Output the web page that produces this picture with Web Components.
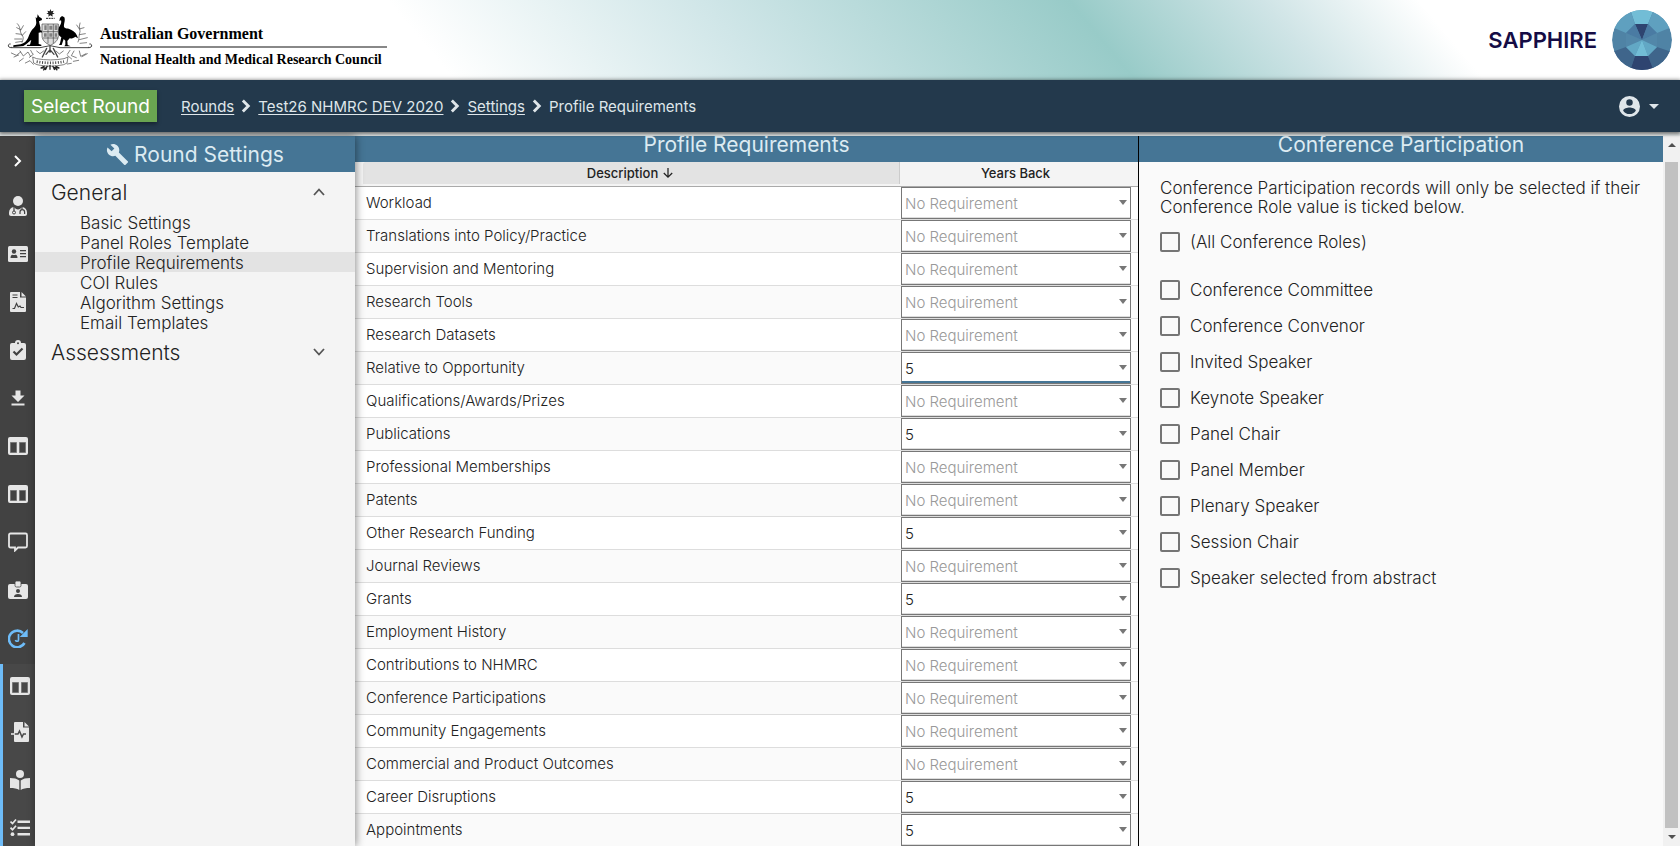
<!DOCTYPE html>
<html lang="en">
<head>
<meta charset="utf-8">
<title>Profile Requirements - Sapphire</title>
<style>
html,body{height:100%;margin:0}
body{font-family:Inter,"Open Sans",sans-serif;font-size:15px;color:#222;background:#fafafa;overflow:hidden}
</style>
</head>
<body>
<sapphire-app></sapphire-app>

<script>
const define = (name, css, html, after) => {
  const t = document.createElement('template');
  t.innerHTML = `<style>*{box-sizing:border-box}${css}</style>${html}`;
  customElements.define(name, class extends HTMLElement {
    constructor() {
      super();
      this.attachShadow({mode: 'open'}).append(t.content.cloneNode(true));
    }
    connectedCallback() { if (after) after(this, this.shadowRoot); }
  });
};

/* Icons are drawn on a 20 x 20 grid in the current colour; "var(--hole)" paints cut-outs. */
const columns = '<rect y="1" width="20" height="18" rx="2"/><path d="M2.500 6.500h6v10h-6zM11.500 6.500h6v10h-6z" fill="var(--hole)" stroke="#777" stroke-width="1"/>';
const ICONS = {
  right: '<path d="M7 5l5 5-5 5" fill="none" stroke="currentColor" stroke-width="2"/>',
  up: '<path d="M5 13l5-5.500 5 5.500" fill="none" stroke="currentColor" stroke-width="1.800"/>',
  down: '<path d="M5 7l5 5.500 5-5.500" fill="none" stroke="currentColor" stroke-width="1.800"/>',
  crumb: '<path d="M6.500 4l6 6-6 6" fill="none" stroke="currentColor" stroke-width="3.200"/>',
  arrow: '<path d="M10 3v13M4 10l6 6 6-6" fill="none" stroke="currentColor" stroke-width="1.800"/>',
  wrench: '<path d="M19.700 16.600l-8-8c.8-2 .3-4.400-1.300-6C8.700.9 6.100.5 4 1.500l3.600 3.600-2.500 2.500L1.400 4C.3 6.100.8 8.700 2.500 10.400c1.600 1.600 4 2.100 6 1.300l8 8c.4.4.9.4 1.300 0l2-2c.4-.3.4-.9-.1-1.100z"/>',
  user: '<path d="M10 0a10 10 0 100 20 10 10 0 000-20zm0 3a3 3 0 110 6.200A3 3 0 0110 3zm0 14.200a7.200 7.200 0 01-6-3.200c0-2 4-3.100 6-3.100s6 1.100 6 3.100a7.200 7.200 0 01-6 3.200z"/>',
  doctor: '<circle cx="10" cy="5" r="5"/><path d="M6 11c1 1.500 2.500 2.500 4 2.500s3-1 4-2.500c3 .3 5 2.500 5 5.500v1.500c0 1.200-.8 2-2 2H3c-1.200 0-2-.8-2-2v-1.500C1 13.500 3 11.300 6 11z"/><path d="M6 11v4M14 11v3M12 18v-2a2.300 2.300 0 014.600 0v2" fill="none" stroke="var(--hole)" stroke-width="1.200"/><circle cx="6" cy="16.500" r="1.500" fill="none" stroke="var(--hole)"/>',
  card: '<rect y="2" width="20" height="16" rx="1.500"/><g fill="var(--hole)"><circle cx="6" cy="7.500" r="2.200"/><path d="M2.500 14c0-2 1-3.200 2-3.200.6.400 2.400.4 3 0 1 0 2 1.200 2 3.200zM12 6h6v1.200h-6zM12 9h6v1.200h-6zM12 12h6v1.200h-6z"/></g>',
  contract: '<path d="M3 0h9v5.500h6V19a1 1 0 01-1 1H3a1 1 0 01-1-1V1a1 1 0 011-1zM13.500 0L18 4.500h-4.500z"/><path d="M4.500 3h5M4.500 5.500h5M4.500 16.500h2l2-5 1.800 3.500 1.700-1 1 1.500h3" fill="none" stroke="var(--hole)" stroke-width="1.200"/>',
  clipboard: '<path d="M4 3h3a3 3 0 016 0h3a2 2 0 012 2v13a2 2 0 01-2 2H4a2 2 0 01-2-2V5a2 2 0 012-2z"/><circle cx="10" cy="3.200" r="1" fill="var(--hole)"/><path d="M5.500 11.500l3 3 6-6" fill="none" stroke="var(--hole)" stroke-width="2.200"/>',
  download: '<path d="M7.500 2.500h5v5h4L10 14 3.500 7.500h4zM3.500 15.500h13v2h-13z"/>',
  columns,
  comment: '<path d="M2.500 1.500h15c1 0 1.500.5 1.500 1.500v11c0 1-.5 1.500-1.500 1.500h-7.500l-3 3v-3H2.500C1.500 15.500 1 15 1 14V3c0-1 .5-1.500 1.500-1.500z" fill="none" stroke="currentColor" stroke-width="1.800"/>',
  badge: '<path d="M2 4h16a2 2 0 012 2v11a2 2 0 01-2 2H2a2 2 0 01-2-2V6a2 2 0 012-2z"/><rect x="7" y="1" width="6" height="6" rx="1.500" stroke="var(--hole)" stroke-width=".8"/><g fill="var(--hole)"><circle cx="10" cy="11" r="2"/><path d="M6 17c0-2 1.500-3 4-3s4 1 4 3z"/></g>',
  history: '<path d="M15 5A8.300 8.300 0 1016.500 15" fill="none" stroke="currentColor" stroke-width="2.600"/><path d="M19.700 1v8h-8z"/><path d="M10.500 6v5.500a1.500 1.500 0 01-3 .5" fill="none" stroke="currentColor" stroke-width="1.700"/>',
  pulse: '<path d="M5 0h8v5.500h6V19a1 1 0 01-1 1H5a1 1 0 01-1-1V1a1 1 0 011-1zM14.500 0L19 4.500h-4.500z"/><path d="M4 12h4l1.500-3 2.500 6 1.500-3H16" fill="none" stroke="var(--hole)" stroke-width="1.500"/><path d="M1 11.200h4v1.600H1z"/>',
  reader: '<circle cx="10" cy="4" r="4"/><path d="M0 8c4 0 7 .8 9.300 2.500V20C7 18.500 4 18 0 18zM20 8c-4 0-7 .8-9.300 2.500V20c2.300-1.500 5.300-2 9.300-2z"/>',
  tasks: '<path d="M7.500 2.500H20v2.400H7.500zM7.500 8.700H20v2.400H7.500zM7.500 15H20v2.400H7.500z"/><circle cx="2.500" cy="16.200" r="1.900"/><path d="M.5 3.500l2 2 3.500-4M.5 9.700l2 2 3.500-4" fill="none" stroke="currentColor" stroke-width="1.700"/>'
};
customElements.define('ui-icon', class extends HTMLElement {
  constructor() { super(); this.attachShadow({mode: 'open'}); }
  connectedCallback() {
    this.shadowRoot.innerHTML = `<style>:host{display:inline-flex;flex:none;width:20px;height:20px}svg{width:100%;height:100%;display:block}</style>
      <svg viewBox="0 0 20 20" fill="currentColor" aria-hidden="true">${ICONS[this.getAttribute('name')]}</svg>`;
  }
});

define('coat-of-arms', ':host{display:block;width:110px;height:78px;flex:none}svg{display:block}', `
<svg width="110" height="78" viewBox="0 0 330 234" role="img" aria-label="Commonwealth Coat of Arms">
  <path d="M151 24l3 7 7-2-3 6 6 3-7 2 1 7-7-4-6 4 1-7-7-2 6-3-3-6 7 2z" fill="#222"/>
  <path d="M138 52h26" stroke="#222" stroke-width="3" stroke-dasharray="6 2"/>
  <path d="M113 40l5 8 7 4 1 5-9 4c1 9 6 17 4 27l7 2 6 5-2 4-9-5-7 1 0 34 8 2v4H80l2-4h8l4-15c-8 6-16 15-24 19l-30 3v-5l22-3c11-3 18-10 22-19 5-13 9-24 18-31 7-6 8-13 6-22l-1-10 4 4z"/>
  <path d="M180 50l6-5 7 4c4 9-2 19-1 28 2 6 12 4 21 9 11 5 18 13 21 26l-8-5c-5 4-11 6-17 5l-7 8 1 12 9 4h-19l3-5 0-12-5-5-6 18h-8l3-5 4-18c-9-6-13-15-9-26 4-9 11-16 8-25l-5 2z"/>
  <g fill="#ddd" stroke="#444" stroke-width="2"><path d="M126 69h49v35c0 14-11 23-24 29-14-6-25-15-25-29z"/><path d="M128 92h47M144 69v58M160 69v58M129 111h45" fill="none"/></g>
  <g fill="#333"><path d="M133 73h7v14h-7zM148 74h9v12h-9zM164 73h8v14h-8zM132 97h8v10h-8zM148 97h9v10h-9zM164 97h7v10h-7z" opacity=".55"/></g>
  <path d="M36 139c-14 4-14-12-4-10M264 139c14 4 14-12 4-10M32 140h88l30-6 30 6h88" fill="none" stroke="#444" stroke-width="3"/>
  <g fill="none" stroke="#444" stroke-width="2" stroke-linecap="round">
    <path d="M52 68c12 12 5 22 14 34 6 9 4 11 0 22M50 80l12 6M48 98l17 2M44 114l22 0M70 74l-8 14M77 92l-11 12M47 124l20-3"/>
    <path d="M240 66c-6 15 4 20-2 35-2 10 0 12-4 22M252 80l-14 4M256 98l-18 3M230 72l8 12M262 110l-24 6M240 127l20-2"/>
    <path d="M34 156l15 7 13-10M42 168l14-6M60 150l10 15 14-12 8 14M70 172l-12 9M76 186l14-7 10 11M92 148l6 11M110 150l10 8 12-9M190 150l-12 9-10-9M210 148l-8 12M222 150l-8 14 15 6M238 150l4 16 16-8M262 158l-16 9M236 178l-16 3M214 187l-12 2M100 160l-12 9M203 164l12 10"/>
    <path d="M150 136v18M140 142l-13 26M160 142l13 26M138 160l12-14 12 14" stroke-width="4"/>
  </g>
  <path d="M98 168l12 5c28 5 55 5 82 0l12-5-3 18-10 5c-30 6-52 6-80 0l-10-5z" fill="#fff" stroke="#444" stroke-width="2"/>
  <path d="M110 182c28 5 54 5 82 0" fill="none" stroke="#444" stroke-width="8" stroke-dasharray="3 5"/>
  <path d="M150 192v14M134 195l-12 6 14-1-6 8M166 195l12 6-14-1 8 8M142 194l-6 13M158 194l6 13" fill="none" stroke="#222" stroke-width="4"/>
</svg>`);

define('app-banner', `
:host{display:flex;height:80px;flex:none;align-items:center;justify-content:space-between;padding-right:8px;
background:linear-gradient(50deg,#fff 26%,#d0e6e8 44%,#98cbc8 65%,#cfe4e6 76%,#fff 85%)}
.brand{display:flex;align-items:center}
.names{margin-left:-10px;padding-top:14px;font:bold 16px/24px "Liberation Serif",serif;color:#000}
.names p{margin:0}.names .council{border-top:2px solid #888;font-size:14px;width:287px;white-space:nowrap}
.product{display:flex;align-items:center;gap:15px;font-size:22px;font-weight:600;color:#150c45}
svg{display:block}`, `
<div class="brand"><coat-of-arms></coat-of-arms><div class="names"><p>Australian Government</p><p class="council">National Health and Medical Research Council</p></div></div>
<div class="product"><span>SAPPHIRE</span>
<svg width="60" height="60" viewBox="0 0 60 60" aria-hidden="true"><defs><clipPath id="c"><circle cx="30" cy="30" r="30"/></clipPath></defs>
<g clip-path="url(#c)"><circle cx="30" cy="30" r="30" fill="#4f83a5"/>
<path fill="#72bdd6" d="M18-1h24l-6 15H23z"/><path fill="#5fa0bf" d="M18-1l5 15-9 9L0 17V0zM42-1l-6 15 9 9 15-6V0z"/>
<path fill="#3f658b" d="M0 42l14-5 9 9-5 15H0zM60 42l-15-5-9 9 6 15h18z"/><path fill="#2e4470" d="M18 61l5-15h13l6 15z"/>
<path fill="#2e4470" d="M23 14h13l-6 16z"/><path fill="#4a7ba3" d="M23 14l7 16-16-7zM36 14l-6 16 15-7z"/>
<path fill="#5287a9" d="M14 23l16 7-16 7zM45 23l-15 7 15 7z"/><path fill="#62a8c5" d="M14 37l16-7-7 16zM45 37l-15-7 6 16z"/><path fill="#72bdd6" d="M30 30l-7 16h13z"/></g></svg></div>`);

define('nav-bar', `
:host{display:flex;height:52px;flex:none;align-items:center;background:#23394c;padding:0 21px 0 24px;color:#dfe6ea;position:relative;z-index:2;box-shadow:0 1px 4px 1px rgba(0,0,0,.55)}
.select{height:32px;width:133px;padding:0;border:0;background:#6aa551;color:#fff;font:400 19px Inter,sans-serif;box-shadow:0 2px 4px rgba(0,0,0,.4)}
nav{display:flex;align-items:center;gap:3px;margin-left:24px;font-size:15px}
a{color:inherit;text-underline-offset:2px}ui-icon{width:18px;height:18px}
.account{margin-left:auto;display:flex;align-items:center;gap:9px;border:0;background:none;padding:0;color:inherit}
.account ui-icon{width:21px;height:21px}
.caret{border:5px solid transparent;border-top-color:currentColor;border-bottom:0}`, `
<button class="select">Select Round</button>
<nav aria-label="Breadcrumb"><a href="#rounds">Rounds</a><ui-icon name="crumb"></ui-icon><a href="#round">Test26 NHMRC DEV 2020</a><ui-icon name="crumb"></ui-icon><a href="#settings">Settings</a><ui-icon name="crumb"></ui-icon><span>Profile Requirements</span></nav>
<button class="account" aria-label="Account"><ui-icon name="user"></ui-icon><span class="caret"></span></button>`);

const railButton = (n, c = '') => `<button class="${c}" aria-label="${n}"><ui-icon name="${n}"></ui-icon></button>`;
define('icon-rail', `
:host{display:flex;flex-direction:column;width:35px;flex:none;background:#424242;color:#e6e6e6;--hole:#424242;overflow:hidden}
button{display:flex;align-items:center;justify-content:center;flex:none;width:100%;height:48px;padding:0 0 0 1px;border:0;background:none;color:inherit}
.toggle{height:46px;padding-top:4px;color:#fff}
.current{color:#6ebcf8}
.group{flex:none;display:flex;flex-direction:column;border-left:3px solid #6ebcf8;background:#484848;--hole:#484848;margin-top:2px}
.group button:first-child{height:44px}`,
  railButton('right', 'toggle') +
  ['doctor', 'card', 'contract', 'clipboard', 'download', 'columns', 'columns', 'comment', 'badge'].map(n => railButton(n)).join('') +
  railButton('history', 'current') +
  '<div class="group">' + ['columns', 'pulse', 'reader', 'tasks'].map(n => railButton(n)).join('') + '</div>');

define('settings-menu', `
:host{display:block;width:320px;flex:none;background:#f4f4f4;position:relative;z-index:1;box-shadow:1px 0 8px rgba(0,0,0,.45)}
h2{margin:0;height:36px;display:flex;align-items:center;justify-content:center;gap:6px;background:#457595;color:#dcebf2;font-size:21px;font-weight:400}
h2 ui-icon{width:22px;height:22px}
.head{display:flex;align-items:center;justify-content:space-between;width:100%;height:40px;padding:0 26px 0 16px;border:0;background:none;color:#222;font:300 21px Inter,sans-serif}
.head ui-icon{color:#555}
ul{list-style:none;margin:0;padding:0}
a{display:block;padding:2px 0 0 45px;font-weight:300;font-size:17px;line-height:18px;color:#222;text-decoration:none}
a[aria-current]{background:#e3e3e3}`, `
<h2><ui-icon name="wrench"></ui-icon>Round Settings</h2>
<button class="head" aria-expanded="true">General<ui-icon name="up"></ui-icon></button>
<ul><li><a href="#basic">Basic Settings</a></li><li><a href="#panel">Panel Roles Template</a></li><li><a href="#profile" aria-current="page">Profile Requirements</a></li><li><a href="#coi">COI Rules</a></li><li><a href="#algorithm">Algorithm Settings</a></li><li><a href="#email">Email Templates</a></li></ul>
<button class="head" aria-expanded="false">Assessments<ui-icon name="down"></ui-icon></button>`);

define('panel-title', `:host{display:block;height:26px;background:#457595}
h2{margin:0;font-size:21px;line-height:17px;font-weight:400;text-align:center;color:#dcebf2}`, '<h2><slot></slot></h2>');

define('years-select', `
:host{display:block;position:relative;height:32px}
select{appearance:none;display:block;width:100%;height:32px;margin:0;padding:0 20px 0 3px;border:1px solid #777;border-radius:0;background:#fff;font:300 15px Inter,sans-serif;color:#222;box-shadow:inset 0 -1px #ddd;outline:0}
select.empty{color:#999}
:host([active]) select{box-shadow:inset 0 -2px #457595}
span{position:absolute;right:4px;top:13px;border:4px solid transparent;border-top:5px solid #777;border-bottom:0;pointer-events:none}`,
'<select><option value="">No Requirement</option><option>5</option></select><span></span>', (el, root) => {
  const s = root.querySelector('select');
  s.value = el.getAttribute('value') || '';
  s.setAttribute('aria-label', el.getAttribute('label') + ' years back');
  const mark = () => s.classList.toggle('empty', !s.value);
  s.addEventListener('change', mark); mark();
});

define('requirements-table', `
:host{display:block;border-right:1px solid #000;min-width:0;background:#fafafa}
table{width:100%;table-layout:fixed;border-collapse:separate;border-spacing:0}
.years{width:238px}
th{height:25px;padding:0;background:#f4f4f4;border-bottom:1px solid #aaa;font-size:13px;font-weight:500;color:#222;vertical-align:top}
th:first-child{padding-left:8px}
th div{display:flex;align-items:center;justify-content:center;gap:3px;height:22px;background:#e3e3e3;border-right:1px solid #ccc;border-radius:3px 0 0 0}
th:last-child div{background:none;border:0;margin-right:7px}
th ui-icon{width:14px;height:14px}
td{height:33px;padding:0 7px 0 1px;border-bottom:1px solid #ddd;background:#fff;vertical-align:top}
tr:nth-child(even) td{background:#fafafa}
td:first-child{padding:0 0 0 11px;font-size:15px;line-height:32px;font-weight:300;color:#222}`, `
<panel-title>Profile Requirements</panel-title>
<table><colgroup><col><col class="years"></colgroup><thead><tr><th scope="col"><div>Description<ui-icon name="arrow"></ui-icon></div></th><th scope="col"><div>Years Back</div></th></tr></thead><tbody></tbody></table>`, (el, root) => {
  const rows = ['Workload', 'Translations into Policy/Practice', 'Supervision and Mentoring', 'Research Tools', 'Research Datasets', 'Relative to Opportunity*', 'Qualifications/Awards/Prizes', 'Publications*', 'Professional Memberships', 'Patents', 'Other Research Funding*', 'Journal Reviews', 'Grants*', 'Employment History', 'Contributions to NHMRC', 'Conference Participations', 'Community Engagements', 'Commercial and Product Outcomes', 'Career Disruptions*', 'Appointments*'];
  root.querySelector('tbody').innerHTML = rows.map(r => {
    const n = r.replace('*', ''), v = r.endsWith('*') ? '5' : '';
    return `<tr><td>${n}</td><td><years-select label="${n}" value="${v}"${n.startsWith('Relative') ? ' active' : ''}></years-select></td></tr>`;
  }).join('');
});

define('check-item', `
:host{display:block}
label{display:flex;align-items:center;gap:10px;height:36px;font-weight:300;font-size:17px;color:#222}
input{appearance:none;flex:none;width:20px;height:20px;margin:0;border:2px solid #757575;border-radius:2px;background:#fafafa}
input:checked{background:#457595}`, '<label><input type="checkbox"><slot></slot></label>');

define('role-list', `
:host{display:block;min-width:0;background:#fafafa}
p{margin:0;padding:17px 18px 7px 21px;font-weight:300;font-size:17px;line-height:19px;color:#222}
.roles{padding-left:21px}
.all{margin-bottom:12px}`, `
<panel-title>Conference Participation</panel-title>
<p>Conference Participation records will only be selected if their Conference Role value is ticked below.</p>
<div class="roles"><check-item class="all">(All Conference Roles)</check-item><check-item>Conference Committee</check-item><check-item>Conference Convenor</check-item><check-item>Invited Speaker</check-item><check-item>Keynote Speaker</check-item><check-item>Panel Chair</check-item><check-item>Panel Member</check-item><check-item>Plenary Speaker</check-item><check-item>Session Chair</check-item><check-item>Speaker selected from abstract</check-item></div>`);

define('scroll-track', `
:host{display:flex;flex-direction:column;align-items:center;width:17px;flex:none;background:#f1f1f1}
i{display:flex;align-items:center;justify-content:center;height:18px;width:17px;flex:none}
i:first-of-type{height:26px;padding-bottom:8px}
i::before{content:"";border:4px solid transparent;border-bottom:4px solid #505050;border-top:0}
i:last-of-type::before{border-top:4px solid #505050;border-bottom:0}
b{flex:1;width:13px;background:#c1c1c1}`, '<i></i><b></b><i></i>');

define('sapphire-app', `
:host{display:flex;flex-direction:column;height:100vh;overflow:hidden}
main{flex:1;min-height:0;display:flex;background:#e6ebeb;padding-top:4px}
.content{flex:1;min-width:0;display:grid;grid-template-columns:196fr 131fr}`, `
<app-banner></app-banner><nav-bar></nav-bar>
<main><icon-rail></icon-rail><settings-menu></settings-menu><div class="content"><requirements-table></requirements-table><role-list></role-list></div><scroll-track></scroll-track></main>`);
</script>
</body>
</html>
